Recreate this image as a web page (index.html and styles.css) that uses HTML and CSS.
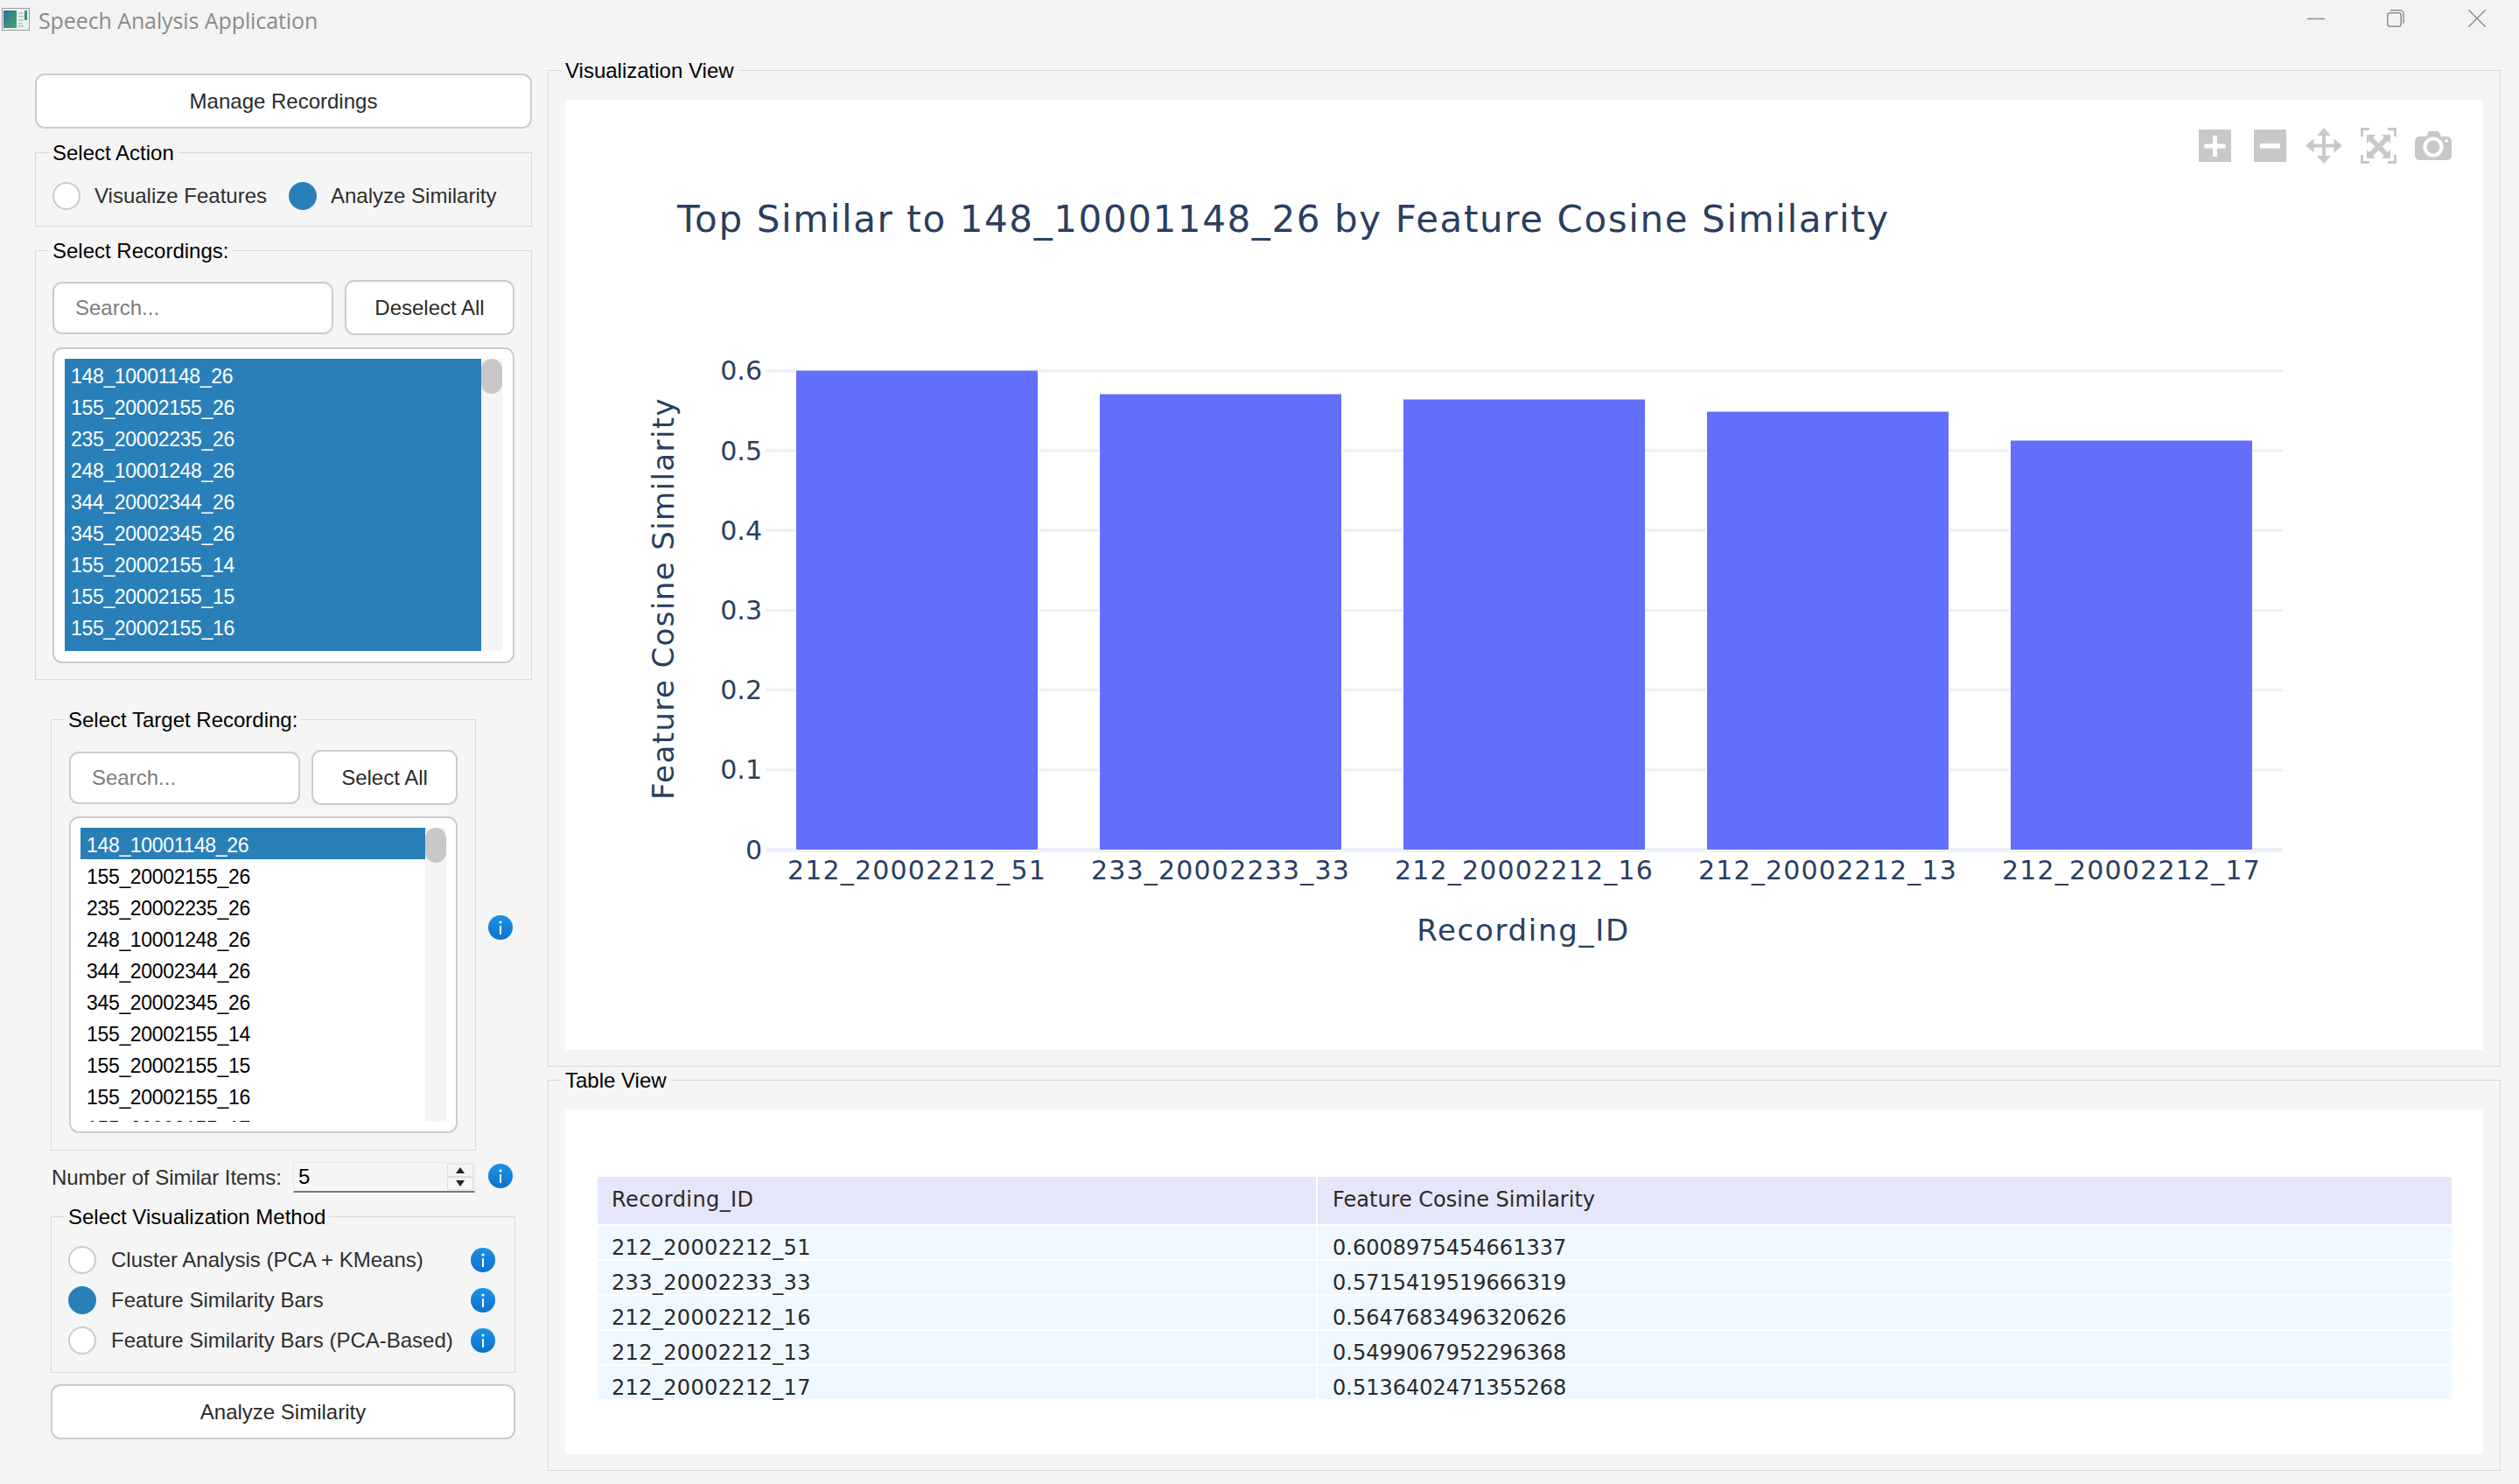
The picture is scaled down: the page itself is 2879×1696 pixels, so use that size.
FILE: index.html
```html
<!DOCTYPE html>
<html lang="en">
<head>
<meta charset="utf-8">
<title>Speech Analysis Application</title>
<link rel="stylesheet" href="styles.css">
</head>
<body>
<svg class="defs" width="0" height="0" aria-hidden="true">
  <defs>
    <linearGradient id="infoGrad" x1="0" y1="0" x2="0" y2="1">
      <stop offset="0" stop-color="#1b93e3"/>
      <stop offset="1" stop-color="#0b72cf"/>
    </linearGradient>
    <linearGradient id="appGrad" x1="0" y1="0" x2="1" y2="1">
      <stop offset="0" stop-color="#2c6f9e"/>
      <stop offset="1" stop-color="#46a765"/>
    </linearGradient>
    <symbol id="info" viewBox="0 0 28 28">
      <circle cx="14" cy="14" r="14" fill="url(#infoGrad)"/>
      <rect x="13" y="12" width="2" height="10" fill="#fff"/>
      <circle cx="14" cy="8" r="1.6" fill="#fff"/>
    </symbol>
  </defs>
</svg>
<div class="app">
  <header class="titlebar">
    <svg class="app-icon" width="32" height="26" viewBox="0 0 32 26">
      <rect x="0.5" y="0.5" width="31" height="25" fill="#eef1f2" stroke="#929a9f"/>
      <rect x="2" y="3" width="15" height="20" fill="url(#appGrad)"/>
      <path d="M19 6h6M19 10h6M19 14h6M19 18h4M19 21h6" stroke="#b3babd" stroke-width="1.5"/>
      <rect x="26" y="3" width="3" height="11" fill="#2f8f7f"/>
    </svg>
    <span class="app-title">Speech Analysis Application</span>
    <div class="window-controls">
      <svg class="wc-min" width="20" height="20" viewBox="0 0 20 20"><path d="M0 10.5h20" stroke="#8f8f8f" stroke-width="1.5"/></svg>
      <svg class="wc-max" width="20" height="20" viewBox="0 0 20 20"><rect x="0.8" y="3.8" width="15.4" height="15.4" rx="3" fill="none" stroke="#8f8f8f" stroke-width="1.5"/><path d="M4 0.8h11a4 4 0 0 1 4 4v11" fill="none" stroke="#8f8f8f" stroke-width="1.5"/></svg>
      <svg width="20" height="20" viewBox="0 0 20 20"><path d="M0 0l20 20M20 0L0 20" stroke="#8f8f8f" stroke-width="1.5"/></svg>
    </div>
  </header>

  <main class="main">
    <section class="left">
      <button class="btn btn-manage">Manage Recordings</button>

      <div class="group group-action">
        <span class="legend">Select Action</span>
        <div class="radio-row">
          <span class="radio"></span><span class="radio-text rt-vis">Visualize Features</span>
          <span class="radio checked"></span><span class="radio-text">Analyze Similarity</span>
        </div>
      </div>

      <div class="group group-rec">
        <span class="legend">Select Recordings:</span>
        <div class="search-row">
          <div class="search search-wide">Search...</div>
          <button class="btn btn-side btn-deselect">Deselect All</button>
        </div>
        <div class="listbox listbox-wide">
          <ul class="items items-all">
            <li>148_10001148_26</li><li>155_20002155_26</li><li>235_20002235_26</li>
            <li>248_10001248_26</li><li>344_20002344_26</li><li>345_20002345_26</li>
            <li>155_20002155_14</li><li>155_20002155_15</li><li>155_20002155_16</li>
          </ul>
          <div class="track"><div class="thumb"></div></div>
        </div>
      </div>

      <div class="target-row">
        <div class="group group-target">
          <span class="legend">Select Target Recording:</span>
          <div class="search-row">
            <div class="search search-narrow">Search...</div>
            <button class="btn btn-side btn-select">Select All</button>
          </div>
          <div class="listbox listbox-narrow">
            <ul class="items items-one">
              <li class="sel">148_10001148_26</li><li>155_20002155_26</li><li>235_20002235_26</li>
              <li>248_10001248_26</li><li>344_20002344_26</li><li>345_20002345_26</li>
              <li>155_20002155_14</li><li>155_20002155_15</li><li>155_20002155_16</li><li>155_20002155_17</li>
            </ul>
            <div class="track"><div class="thumb"></div></div>
          </div>
        </div>
        <svg class="info info-target"><use href="#info"/></svg>
      </div>

      <div class="number-row">
        <span class="number-label">Number of Similar Items:</span>
        <div class="spin">
          <span class="spin-value">5</span>
          <div class="spin-btns">
            <span class="spin-btn"><i class="tri tri-up"></i></span>
            <span class="spin-btn"><i class="tri tri-down"></i></span>
          </div>
        </div>
        <svg class="info"><use href="#info"/></svg>
      </div>

      <div class="group group-method">
        <span class="legend">Select Visualization Method</span>
        <div class="method"><span class="radio"></span><span class="radio-text">Cluster Analysis (PCA + KMeans)</span><svg class="info info-end"><use href="#info"/></svg></div>
        <div class="method"><span class="radio checked"></span><span class="radio-text">Feature Similarity Bars</span><svg class="info info-end"><use href="#info"/></svg></div>
        <div class="method"><span class="radio"></span><span class="radio-text">Feature Similarity Bars (PCA-Based)</span><svg class="info info-end"><use href="#info"/></svg></div>
      </div>

      <button class="btn btn-analyze">Analyze Similarity</button>
    </section>

    <section class="right">
      <div class="group group-viz">
        <span class="legend legend-right">Visualization View</span>
        <div class="panel">
          <svg class="chart" width="2192" height="1086" viewBox="646 114 2192 1086">
            <g stroke="#ebf0f8" stroke-width="3">
              <path d="M875 424H2609M875 515H2609M875 606H2609M875 697.500H2609M875 788.500H2609M875 880H2609"/>
            </g>
            <path d="M875 971.500H2609" stroke="#ebf0f8" stroke-width="5"/>
            <g fill="#636efa" stroke="#fff" stroke-width="1">
              <rect x="909.500" y="423" width="277" height="548.500"/>
              <rect x="1256.500" y="450" width="277" height="521.500"/>
              <rect x="1603.500" y="456" width="277" height="515.500"/>
              <rect x="1950.500" y="470" width="277" height="501.500"/>
              <rect x="2297.500" y="503" width="277" height="468.500"/>
            </g>
            <text class="c-title" x="774" y="265">Top Similar to 148_10001148_26 by Feature Cosine Similarity</text>
            <g class="c-tick c-end">
              <text x="871" y="434">0.6</text>
              <text x="871" y="526">0.5</text>
              <text x="871" y="617">0.4</text>
              <text x="871" y="708">0.3</text>
              <text x="871" y="799">0.2</text>
              <text x="871" y="890">0.1</text>
              <text x="871" y="982">0</text>
            </g>
            <g class="c-tick c-mid c-xtick">
              <text x="1048" y="1005">212_20002212_51</text>
              <text x="1395" y="1005">233_20002233_33</text>
              <text x="1742" y="1005">212_20002212_16</text>
              <text x="2089" y="1005">212_20002212_13</text>
              <text x="2436" y="1005">212_20002212_17</text>
            </g>
            <text class="c-axis c-xaxis c-mid" x="1741" y="1075">Recording_ID</text>
            <text class="c-axis c-mid" transform="translate(770 684) rotate(-90)">Feature Cosine Similarity</text>
            <g fill="#c8c8c8">
              <rect x="2513" y="148" width="37" height="37"/>
              <path d="M2529 155h5v9.500h9.500v5H2534V179h-5v-9.500h-9.500v-5h9.500z" fill="#fff"/>
              <rect x="2576" y="148" width="37" height="37"/>
              <rect x="2583" y="164" width="23" height="5.500" fill="#fff"/>
              <path d="M2656 146l8 9h-6v9.500h9.500v-6l9.500 8-9.500 8v-6H2658V178h6l-8 9-8-9h6v-9.500h-9.500v6l-9.500-8 9.500-8v6H2654V155h-6z"/>
              <path d="M2698 156v-10h10v3h-7v7zM2729 146h10v10h-3v-7h-7zM2698 177h3v7h7v3h-10zM2736 177h3v10h-10v-3h7z"/>
              <path d="M2705 154h10l-3 3 6.500 6.500 6.500-6.500-3-3h10v10l-3-3-6.500 6.500 6.500 6.500 3-3v10h-10l3-3-6.500-6.500-6.500 6.500 3 3h-10v-10l3 3 6.500-6.500-6.500-6.500-3 3z"/>
              <path d="M2766 156h7l3-6h11l3 6h7a6 6 0 0 1 5 5v17a5 5 0 0 1-5 5h-31a6 6 0 0 1-6-5v-17a6 6 0 0 1 6-5z"/>
              <circle cx="2781" cy="168" r="11.500" fill="#fff"/>
              <circle cx="2781" cy="168" r="7.500"/>
              <circle cx="2796" cy="161" r="1.800" fill="#fff"/>
            </g>
          </svg>
        </div>
      </div>

      <div class="group group-table">
        <span class="legend legend-right">Table View</span>
        <div class="panel panel-table">
          <table class="data">
            <thead>
              <tr><th class="col-a">Recording_ID</th><th class="col-b">Feature Cosine Similarity</th></tr>
            </thead>
            <tbody>
              <tr><td class="id">212_20002212_51</td><td>0.6008975454661337</td></tr>
              <tr><td class="id">233_20002233_33</td><td>0.5715419519666319</td></tr>
              <tr><td class="id">212_20002212_16</td><td>0.5647683496320626</td></tr>
              <tr><td class="id">212_20002212_13</td><td>0.5499067952296368</td></tr>
              <tr><td class="id">212_20002212_17</td><td>0.5136402471355268</td></tr>
            </tbody>
          </table>
        </div>
      </div>
    </section>
  </main>
</div>
</body>
</html>
```
FILE: styles.css
```css
* { box-sizing: border-box; }
html, body { margin: 0; padding: 0; }
body {
  width: 2879px;
  height: 1696px;
  overflow: hidden;
  background: #f5f5f5;
  font-family: "Liberation Sans", Arial, sans-serif;
  font-size: 24px;
  color: #2b2b2b;
}
.defs { position: absolute; }
.app { display: flex; flex-direction: column; height: 1696px; }

/* title bar */
.titlebar {
  flex: none;
  height: 45px;
  background: #f3f3f3;
  display: flex;
  align-items: center;
  padding: 0 38px 0 2px;
}
.app-icon { margin-right: 10px; margin-top: -1px; }
.app-title { font-family: "Open Sans", sans-serif; font-size: 25px; color: #8b8b8b; letter-spacing: -0.1px; }
.window-controls { margin-left: auto; display: flex; margin-top: -3px; }
.wc-min { margin-right: 71px; }
.wc-max { margin-right: 73px; }

/* layout */
.main { display: flex; gap: 18px; padding: 35px 21px 0 40px; }
.left { width: 568px; flex: none; padding-top: 4px; display: flex; flex-direction: column; }
.right { width: 2232px; flex: none; display: flex; flex-direction: column; }

/* shared */
.btn {
  display: block;
  background: #fff;
  border: 2px solid #cccccc;
  border-radius: 11px;
  font: inherit;
  color: #2b2b2b;
  padding: 0;
}
.btn-manage { height: 63px; width: 568px; }
.btn-analyze { height: 63px; width: 531px; margin: 14px 0 0 18px; }
.group { position: relative; border: 1px solid #d9d9d9; }
.legend {
  position: absolute;
  top: -15px;
  left: 15px;
  height: 30px;
  line-height: 30px;
  padding: 0 4px;
  background: #f5f5f5;
  color: #000;
  white-space: nowrap;
}
.legend-right { left: 15px; padding: 0 5px 0 4px; }

.group-action { height: 85px; margin-top: 27px; padding: 33px 0 0 19px; }
.radio-row { display: flex; align-items: center; }
.radio { flex: none; width: 32px; height: 32px; border-radius: 50%; background: #fff; border: 2px solid #cccccc; }
.radio.checked { background: #2980b9; border-color: #2980b9; }
.radio-text { margin-left: 16px; white-space: nowrap; color: #2e2e2e; }
.rt-vis { width: 222px; }

.group-rec { height: 491px; margin-top: 27px; padding: 33px 19px 0 19px; }
.search-row { display: flex; align-items: center; justify-content: space-between; height: 63px; }
.search {
  background: #fff;
  border: 2px solid #cccccc;
  border-radius: 11px;
  height: 60px;
  line-height: 56px;
  padding-left: 24px;
  color: #7d7d7d;
}
.search-wide { width: 321px; }
.search-narrow { width: 264px; }
.btn-side { height: 63px; }
.btn-deselect { width: 194px; }
.btn-select { width: 167px; }

.listbox {
  display: flex;
  background: #fff;
  border: 2px solid #cccccc;
  border-radius: 11px;
  margin-top: 14px;
  overflow: hidden;
}
.listbox-wide { height: 361px; padding: 11px 12px 12px 12px; }
.listbox-narrow { height: 362px; padding: 11px; margin-top: 13px; }
.items { list-style: none; margin: 0; padding: 0; overflow: hidden; letter-spacing: -0.33px; font-size: 23px; }
.items li { height: 36px; line-height: 34px; padding: 3px 0 0 7px; white-space: nowrap; }
.items-all { width: 476px; background: #2980b9; color: #fff; }
.items-one { width: 394px; color: #000; }
.items-one .sel { background: #2980b9; color: #fff; }
.track { width: 24px; background: #f5f5f5; }
.thumb { height: 40px; border-radius: 12px; background: #c8c8c8; }

.target-row { display: flex; align-items: center; margin: 45px 0 0 18px; }
.group-target { width: 486px; height: 493px; padding: 34px 20px 0 20px; flex: none; }
.info { width: 28px; height: 28px; flex: none; display: block; }
.info-target { margin: -17px 0 0 14px; }

.number-row { display: flex; align-items: center; height: 35px; margin: 13px 0 0 19px; }
.number-label { width: 276px; white-space: nowrap; letter-spacing: -0.05px; color: #2e2e2e; }
.spin {
  width: 208px;
  height: 35px;
  display: flex;
  align-items: center;
  justify-content: space-between;
  background: #f5f5f5;
  border: 1px solid #e8e8e8;
  border-bottom: 2px solid #777777;
  padding: 0 1px 0 5px;
}
.spin-value { color: #000; }
.spin-btns { display: flex; flex-direction: column; width: 30px; }
.spin-btn { height: 15px; border: 1px solid #dddddd; display: flex; align-items: center; justify-content: center; }
.tri { width: 0; height: 0; border-left: 5.5px solid transparent; border-right: 5.5px solid transparent; }
.tri-up { border-bottom: 7px solid #222222; }
.tri-down { border-top: 7px solid #222222; }
.number-row .info { margin-left: 15px; margin-top: -3px; }

.group-method { width: 531px; height: 179px; margin: 27px 0 0 18px; padding: 33px 22px 0 19px; }
.method { display: flex; align-items: center; height: 32px; margin-bottom: 14px; }
.method .radio-text { margin-left: 17px; }
.info-end { margin-left: auto; }
.btn-analyze { margin-top: 13px; }

/* right */
.group-viz { height: 1139px; padding: 33px 19px 0; }
.group-table { height: 447px; margin-top: 15px; padding: 33px 19px 0; }
.panel { background: #fff; height: 1086px; }
.chart { display: block; }
.panel-table { height: 394px; padding: 75px 0 0 35px; }

.c-title { font-family: "DejaVu Sans", Verdana, sans-serif; font-size: 42px; letter-spacing: 1.6px; fill: #2a3f5f; }
.c-tick { font-family: "DejaVu Sans", Verdana, sans-serif; font-size: 30px; fill: #2a3f5f; }
.c-xtick { letter-spacing: 1.2px; }
.c-axis { font-family: "DejaVu Sans", Verdana, sans-serif; font-size: 34px; letter-spacing: 1.4px; fill: #2a3f5f; }
.c-xaxis { letter-spacing: 1.7px; }
.c-end { text-anchor: end; }
.c-mid { text-anchor: middle; }

.data {
  border-collapse: separate;
  border-spacing: 2px;
  font-family: "DejaVu Sans", Verdana, sans-serif;
  font-size: 24px;
  color: #2a2a2a;
  table-layout: fixed;
  width: 2123px;
}
.data th { background: #e6e6fa; height: 54px; font-weight: normal; text-align: left; padding: 0 0 3px 16px; }
.data td { background: #f0f8ff; height: 38px; padding: 12px 0 0 17px; line-height: 26px; white-space: nowrap; }
.data td.id { padding-left: 16px; letter-spacing: 0.35px; }
.data th.col-a { width: 821px; letter-spacing: 0.4px; }
.data th.col-b { padding-left: 17px; }
```
